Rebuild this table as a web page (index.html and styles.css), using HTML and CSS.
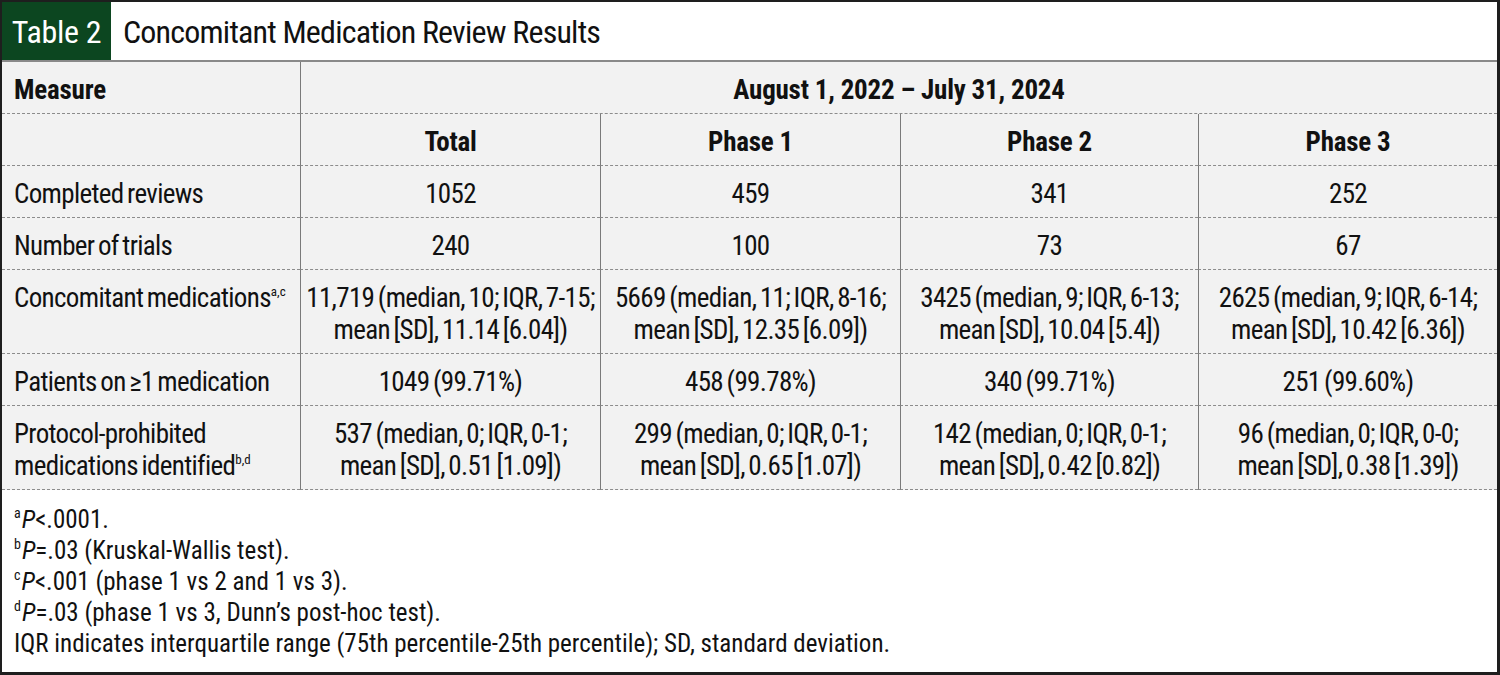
FILE: index.html
```html
<!DOCTYPE html>
<html>
<head>
<meta charset="utf-8">
<link rel="stylesheet" href="styles.css">
</head>
<body>
<div class="frame">
  <div class="title-bar">
    <div class="tag">Table 2</div>
    <div class="title">Concomitant Medication Review Results</div>
  </div>
  <div class="grid">
    <div class="cell label head">Measure</div>
    <div class="cell span4 head sep">August 1, 2022 – July 31, 2024</div>

    <div class="cell label"></div>
    <div class="cell head sep">Total</div>
    <div class="cell head sep">Phase 1</div>
    <div class="cell head sep">Phase 2</div>
    <div class="cell head sep">Phase 3</div>

    <div class="cell label">Completed reviews</div>
    <div class="cell sep">1052</div>
    <div class="cell sep">459</div>
    <div class="cell sep">341</div>
    <div class="cell sep">252</div>

    <div class="cell label">Number of trials</div>
    <div class="cell sep">240</div>
    <div class="cell sep">100</div>
    <div class="cell sep">73</div>
    <div class="cell sep">67</div>

    <div class="cell label">Concomitant medications<sup>a,c</sup></div>
    <div class="cell sep">11,719 (median, 10; IQR, 7-15;<br>mean [SD], 11.14 [6.04])</div>
    <div class="cell sep">5669 (median, 11; IQR, 8-16;<br>mean [SD], 12.35 [6.09])</div>
    <div class="cell sep">3425 (median, 9; IQR, 6-13;<br>mean [SD], 10.04 [5.4])</div>
    <div class="cell sep">2625 (median, 9; IQR, 6-14;<br>mean [SD], 10.42 [6.36])</div>

    <div class="cell label">Patients on ≥1 medication</div>
    <div class="cell sep">1049 (99.71%)</div>
    <div class="cell sep">458 (99.78%)</div>
    <div class="cell sep">340 (99.71%)</div>
    <div class="cell sep">251 (99.60%)</div>

    <div class="cell label">Protocol-prohibited<br>medications identified<sup>b,d</sup></div>
    <div class="cell sep">537 (median, 0; IQR, 0-1;<br>mean [SD], 0.51 [1.09])</div>
    <div class="cell sep">299 (median, 0; IQR, 0-1;<br>mean [SD], 0.65 [1.07])</div>
    <div class="cell sep">142 (median, 0; IQR, 0-1;<br>mean [SD], 0.42 [0.82])</div>
    <div class="cell sep">96 (median, 0; IQR, 0-0;<br>mean [SD], 0.38 [1.39])</div>
  </div>
  <div class="notes">
    <p><sup>a</sup><i>P</i>&lt;.0001.</p>
    <p><sup>b</sup><i>P</i>=.03 (Kruskal-Wallis test).</p>
    <p><sup>c</sup><i>P</i>&lt;.001 (phase 1 vs 2 and 1 vs 3).</p>
    <p><sup>d</sup><i>P</i>=.03 (phase 1 vs 3, Dunn’s post-hoc test).</p>
    <p>IQR indicates interquartile range (75th percentile-25th percentile); SD, standard deviation.</p>
  </div>
</div>
</body>
</html>
```

FILE: styles.css
```css
html, body {
  margin: 0;
  padding: 0;
  background: #fff;
}
body {
  font-family: "Roboto Condensed", "Liberation Sans Narrow", "DejaVu Sans Condensed", "Liberation Sans", sans-serif;
  color: #111;
}
.frame {
  width: 1500px;
  height: 675px;
  box-sizing: border-box;
  border-style: solid;
  border-color: #1e1e1e;
  border-width: 2px 3px 3px 2px;
  display: flex;
  flex-direction: column;
  background: #fff;
  overflow: hidden;
}
.title-bar {
  flex: none;
  height: 58px;
  display: flex;
  align-items: stretch;
  border-bottom: 2px solid #8a8a8a;
}
.tag {
  width: 109px;
  box-sizing: border-box;
  background: #0c4620;
  color: #fff;
  font-size: 32px;
  letter-spacing: -0.3px;
  display: flex;
  align-items: center;
  justify-content: center;
  padding-top: 2px;
}
.title {
  font-size: 32px;
  letter-spacing: -0.8px;
  display: flex;
  align-items: center;
  padding-left: 12px;
  padding-top: 2px;
  color: #111;
}
.grid {
  flex: none;
  display: grid;
  grid-template-columns: 298px 300px 300px 298px 1fr;
  background: #f2f2f2;
}
.cell {
  font-size: 27px;
  line-height: 32px;
  letter-spacing: -0.65px;
  word-spacing: -2px;
  padding: 12px 3px 7px;
  text-align: center;
  white-space: nowrap;
  border-bottom: 1px dashed #8c8c8c;
}
.label {
  text-align: left;
  padding-left: 12px;
}
.sep {
  border-left: 1.5px solid #7a7a7a;
}
.span4 {
  grid-column: span 4;
}
.head {
  font-weight: bold;
  letter-spacing: -0.2px;
  word-spacing: 0;
}
sup {
  font-size: 13px;
  line-height: 0;
  letter-spacing: 0;
  vertical-align: 11px;
}
.notes {
  flex: none;
  padding: 14px 12px 0;
  font-size: 25px;
  line-height: 31px;
}
.notes p {
  margin: 0;
}
.notes sup {
  font-size: 14px;
  vertical-align: 10px;
  margin-right: 1px;
}
```
